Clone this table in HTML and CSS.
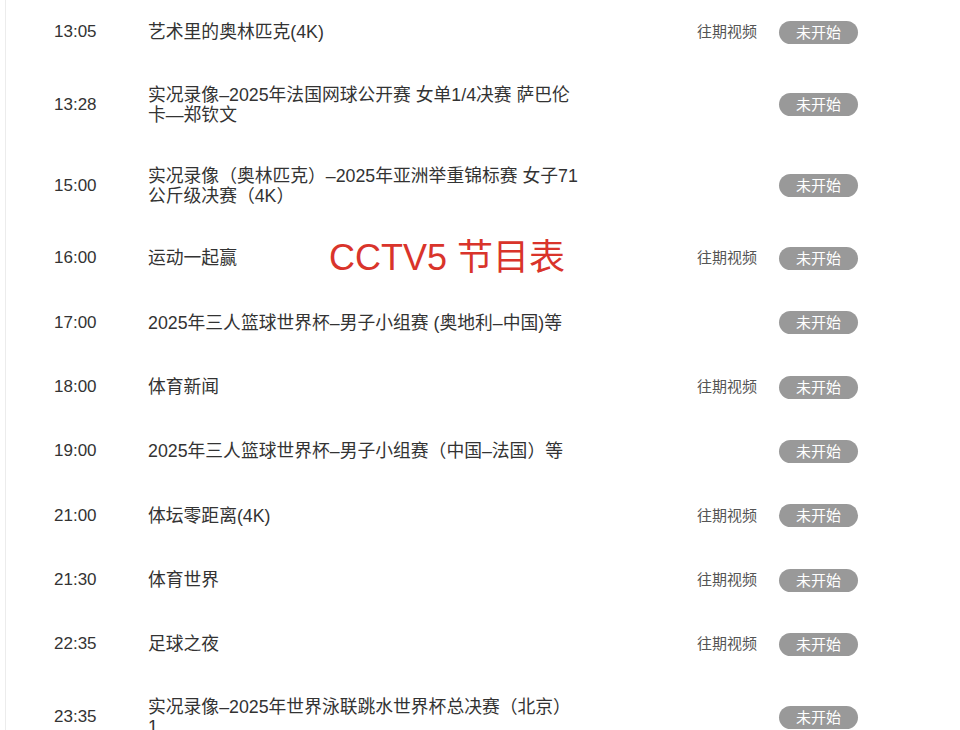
FILE: index.html
```html
<!DOCTYPE html>
<html lang="zh-CN">
<head>
<meta charset="utf-8">
<title>CCTV5 节目表</title>
<link rel="stylesheet" href="styles.css">
</head>
<body>
<div class="page">
  <ul class="list">
    <li class="row"><span class="time">13:05</span><span class="title">艺术里的奥林匹克(4K)</span><span class="actions"><span class="replay">往期视频</span><span class="badge">未开始</span></span></li>
    <li class="row"><span class="time">13:28</span><span class="title">实况录像–2025年法国网球公开赛 女单1/4决赛 萨巴伦卡—郑钦文</span><span class="actions"><span class="badge">未开始</span></span></li>
    <li class="row"><span class="time">15:00</span><span class="title">实况录像（奥林匹克）–2025年亚洲举重锦标赛 女子71公斤级决赛（4K）</span><span class="actions"><span class="badge">未开始</span></span></li>
    <li class="row"><span class="time">16:00</span><span class="title">运动一起赢</span><span class="actions"><span class="replay">往期视频</span><span class="badge">未开始</span></span></li>
    <li class="row"><span class="time">17:00</span><span class="title">2025年三人篮球世界杯–男子小组赛 (奥地利–中国)等</span><span class="actions"><span class="badge">未开始</span></span></li>
    <li class="row"><span class="time">18:00</span><span class="title">体育新闻</span><span class="actions"><span class="replay">往期视频</span><span class="badge">未开始</span></span></li>
    <li class="row"><span class="time">19:00</span><span class="title">2025年三人篮球世界杯–男子小组赛（中国–法国）等</span><span class="actions"><span class="badge">未开始</span></span></li>
    <li class="row"><span class="time">21:00</span><span class="title">体坛零距离(4K)</span><span class="actions"><span class="replay">往期视频</span><span class="badge">未开始</span></span></li>
    <li class="row"><span class="time">21:30</span><span class="title">体育世界</span><span class="actions"><span class="replay">往期视频</span><span class="badge">未开始</span></span></li>
    <li class="row"><span class="time">22:35</span><span class="title">足球之夜</span><span class="actions"><span class="replay">往期视频</span><span class="badge">未开始</span></span></li>
    <li class="row"><span class="time">23:35</span><span class="title">实况录像–2025年世界泳联跳水世界杯总决赛（北京）<br>1</span><span class="actions"><span class="badge">未开始</span></span></li>
  </ul>
  <div class="overlay-label">CCTV5 节目表</div>
</div>
</body>
</html>
```

FILE: styles.css
```css
html, body {
  margin: 0;
  padding: 0;
  background: #ffffff;
  height: 100%;
  overflow: hidden;
}

body {
  font-family: "Liberation Sans", "Noto Sans CJK SC", sans-serif;
  color: #333333;
}

.page {
  position: relative;
  margin-left: 5px;
  border-left: 1px solid #ececec;
  border-top: 2px solid #f2f2f2;
  margin-top: -2px;
  min-height: 100%;
}

.list {
  list-style: none;
  margin: 0;
  padding: 0 102px 0 48px;
}

.row {
  display: flex;
  align-items: center;
  min-height: 64.33px;
}

.time {
  flex: 0 0 94px;
  font-size: 17px;
  line-height: 20px;
  color: #333333;
}

.title {
  flex: 0 0 436px;
  font-size: 17.8px;
  line-height: 20px;
  padding: 20.5px 0;
  color: #333333;
}

.actions {
  margin-left: auto;
  display: flex;
  align-items: center;
  gap: 22px;
}

.replay {
  font-size: 15px;
  line-height: 20px;
  color: #555555;
}

.badge {
  display: inline-flex;
  align-items: center;
  justify-content: center;
  width: 79px;
  height: 23px;
  border-radius: 12px;
  background: #999999;
  color: #ffffff;
  font-size: 15px;
  line-height: 23px;
}

.overlay-label {
  position: absolute;
  left: 323px;
  top: 237px;
  font-size: 36px;
  line-height: 42px;
  color: #d9342b;
  white-space: nowrap;
}
```
